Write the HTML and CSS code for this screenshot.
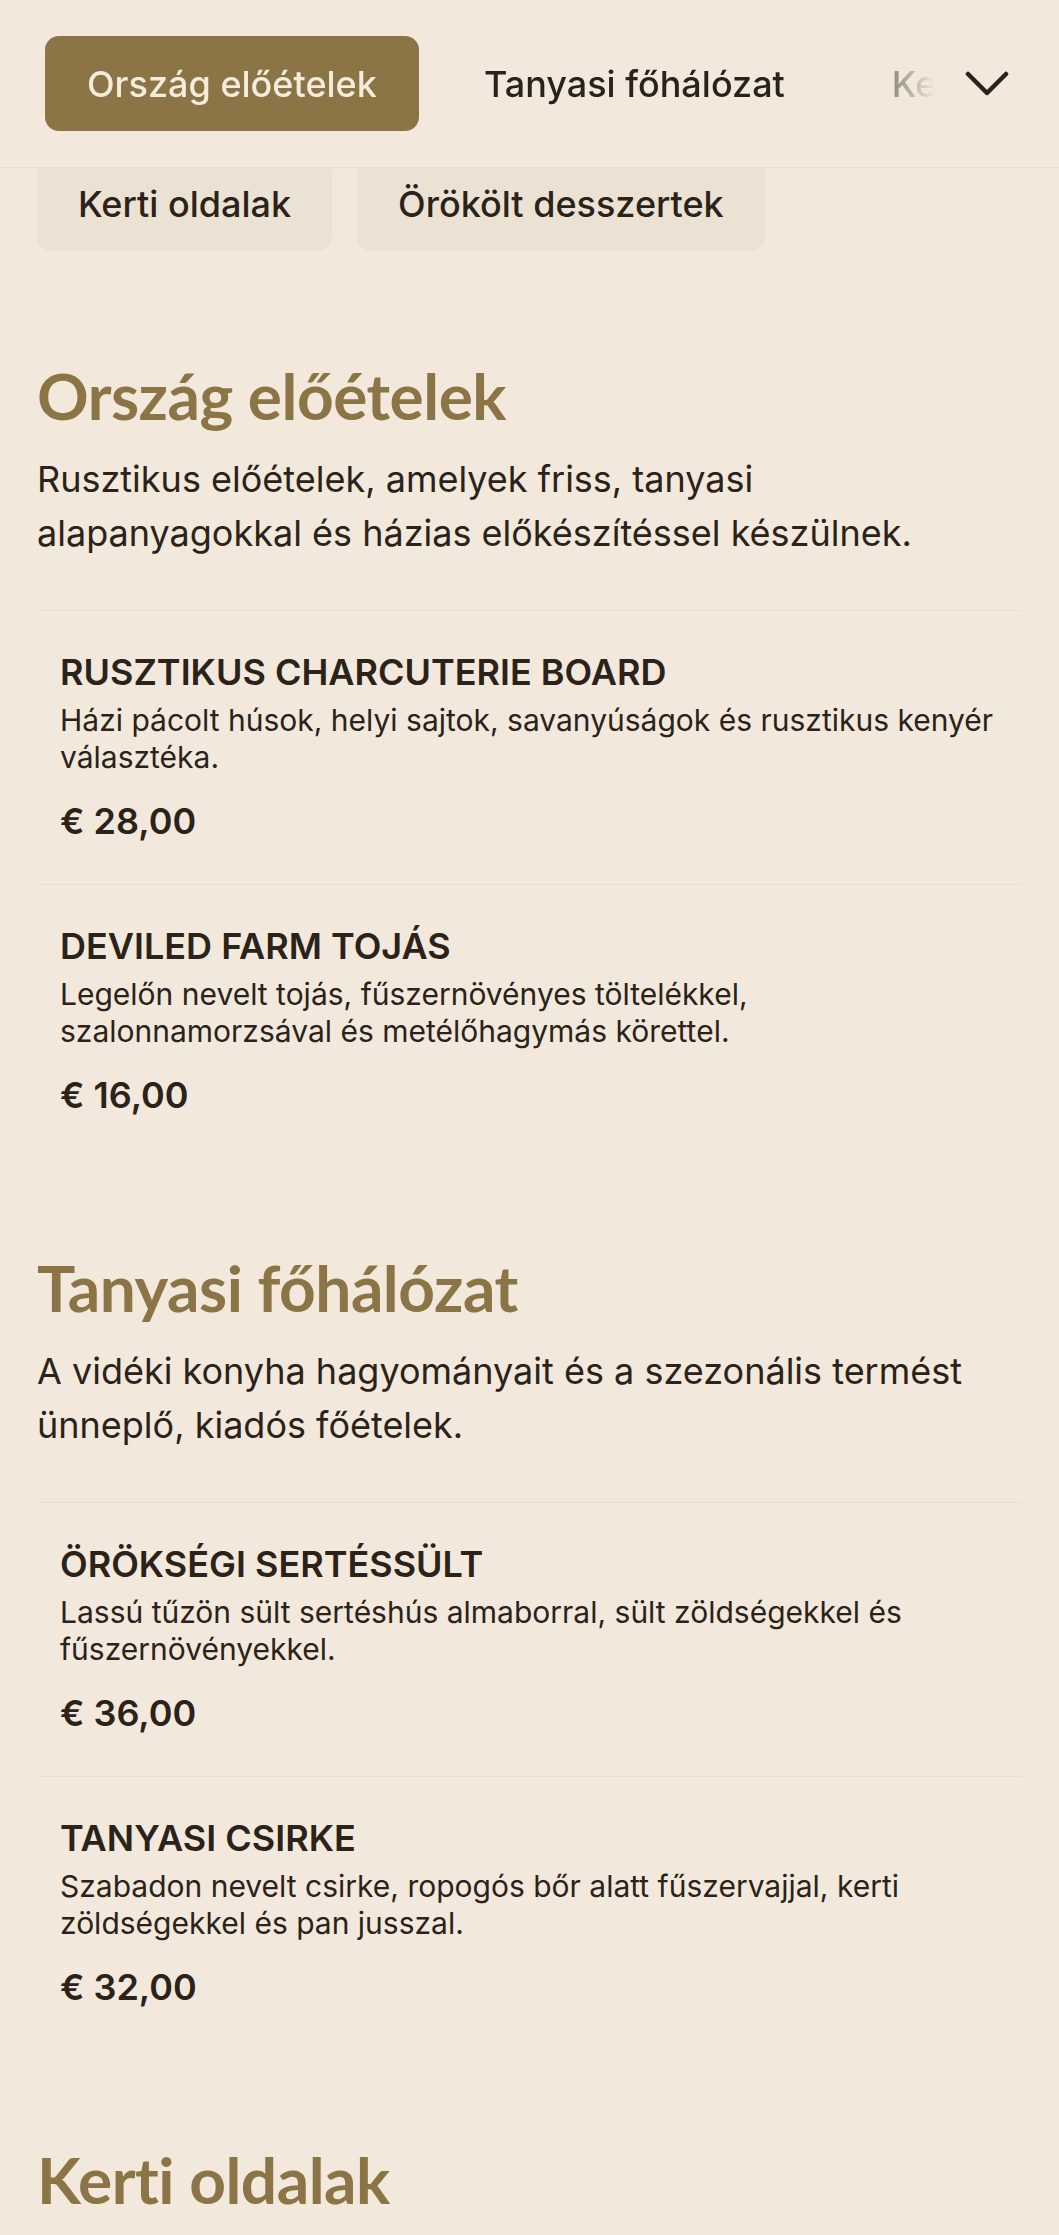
FILE: index.html
```html
<!DOCTYPE html>
<html lang="hu">
<head>
<meta charset="utf-8">
<title>Menü</title>
<link rel="stylesheet" href="styles.css">
</head>
<body>
<header class="topbar">
  <nav class="tabs">
    <a class="tab tab-active">Ország előételek</a>
    <a class="tab">Tanyasi főhálózat</a>
    <a class="tab">Kerti oldalak</a>
    <a class="tab">Örökölt desszertek</a>
  </nav>
  <button class="toggle" aria-label="Kategóriák">
    <svg class="chev" viewBox="0 0 44 26" width="44" height="26"><polyline points="3,3 22,22 41,3" fill="none" stroke="#2b2319" stroke-width="4.5" stroke-linecap="round" stroke-linejoin="round"/></svg>
  </button>
</header>
<div class="chips">
  <a class="chip">Kerti oldalak</a>
  <a class="chip">Örökölt desszertek</a>
</div>
<main class="menu">
  <section class="section">
    <h2 class="sec-title">Ország előételek</h2>
    <p class="sec-desc">Rusztikus előételek, amelyek friss, tanyasi alapanyagokkal és házias előkészítéssel készülnek.</p>
    <div class="items">
      <article class="item">
        <h3 class="item-name">RUSZTIKUS CHARCUTERIE BOARD</h3>
        <p class="item-desc">Házi pácolt húsok, helyi sajtok, savanyúságok és rusztikus kenyér választéka.</p>
        <div class="price">€ 28,00</div>
      </article>
      <article class="item">
        <h3 class="item-name">DEVILED FARM TOJÁS</h3>
        <p class="item-desc">Legelőn nevelt tojás, fűszernövényes töltelékkel, szalonnamorzsával és metélőhagymás körettel.</p>
        <div class="price">€ 16,00</div>
      </article>
    </div>
  </section>
  <section class="section">
    <h2 class="sec-title">Tanyasi főhálózat</h2>
    <p class="sec-desc">A vidéki konyha hagyományait és a szezonális termést ünneplő, kiadós főételek.</p>
    <div class="items">
      <article class="item">
        <h3 class="item-name">ÖRÖKSÉGI SERTÉSSÜLT</h3>
        <p class="item-desc">Lassú tűzön sült sertéshús almaborral, sült zöldségekkel és fűszernövényekkel.</p>
        <div class="price">€ 36,00</div>
      </article>
      <article class="item">
        <h3 class="item-name">TANYASI CSIRKE</h3>
        <p class="item-desc">Szabadon nevelt csirke, ropogós bőr alatt fűszervajjal, kerti zöldségekkel és pan jusszal.</p>
        <div class="price">€ 32,00</div>
      </article>
    </div>
  </section>
  <section class="section">
    <h2 class="sec-title">Kerti oldalak</h2>
    <p class="sec-desc">Friss, szezonális köretek a kertből.</p>
  </section>
</main>
</body>
</html>
```

FILE: styles.css
```css
* { box-sizing: border-box; }

body {
  margin: 0;
  background: #f2e9dc;
  color: #2b2319;
  font-family: Inter, "Noto Sans", sans-serif;
}

.topbar {
  position: sticky;
  top: 0;
  z-index: 2;
  height: 168px;
  display: flex;
  align-items: center;
  gap: 12px;
  padding: 0 37px 0 45px;
  background: #f2e9dc;
  border-bottom: 1px solid #e8dfd0;
}

.tabs {
  flex: 1;
  min-width: 0;
  display: flex;
  gap: 23px;
  overflow: hidden;
  -webkit-mask-image: linear-gradient(to right, #000 calc(100% - 95px), transparent calc(100% - 5px));
  mask-image: linear-gradient(to right, #000 calc(100% - 95px), transparent calc(100% - 5px));
}

.tab {
  flex: none;
  height: 95px;
  display: flex;
  align-items: center;
  padding: 0 42px;
  border-radius: 14px;
  font-size: 36px;
  font-weight: 500;
  white-space: nowrap;
  color: #2b2319;
}

.tab-active {
  background: #8b7547;
  color: #f5ecda;
}

.toggle {
  flex: none;
  width: 70px;
  height: 70px;
  display: flex;
  align-items: center;
  justify-content: center;
  padding: 0;
  border: 0;
  background: transparent;
}

.chips {
  display: flex;
  gap: 25px;
  padding: 0 37px;
  margin-top: -12px;
}

.chip {
  height: 95px;
  display: flex;
  align-items: center;
  padding: 0 41px;
  border-radius: 14px;
  background: #ebe2d3;
  font-size: 36px;
  font-weight: 500;
  white-space: nowrap;
}

.menu {
  padding: 0 37px;
}

.section {
  padding-top: 91px;
}

.section:first-child {
  padding-top: 107px;
}

.sec-title {
  margin: 0;
  font-family: Lato, "Open Sans", sans-serif;
  font-weight: 700;
  font-size: 64px;
  line-height: 1.2;
  letter-spacing: -0.5px;
  color: #8b7547;
}

.sec-desc {
  margin: 17px 0 0;
  font-size: 36px;
  line-height: 54px;
}

.items {
  margin-top: 50px;
}

.item {
  border-top: 1px solid #e8dfd0;
  padding: 38px 23px 40px;
}

.item-name {
  margin: 0;
  font-size: 36px;
  font-weight: 600;
  line-height: 1.3;
}

.item-desc {
  margin: 6px 0 0;
  font-size: 30px;
  line-height: 37px;
}

.price {
  margin-top: 22px;
  font-size: 36px;
  font-weight: 600;
  line-height: 1.3;
}
```
